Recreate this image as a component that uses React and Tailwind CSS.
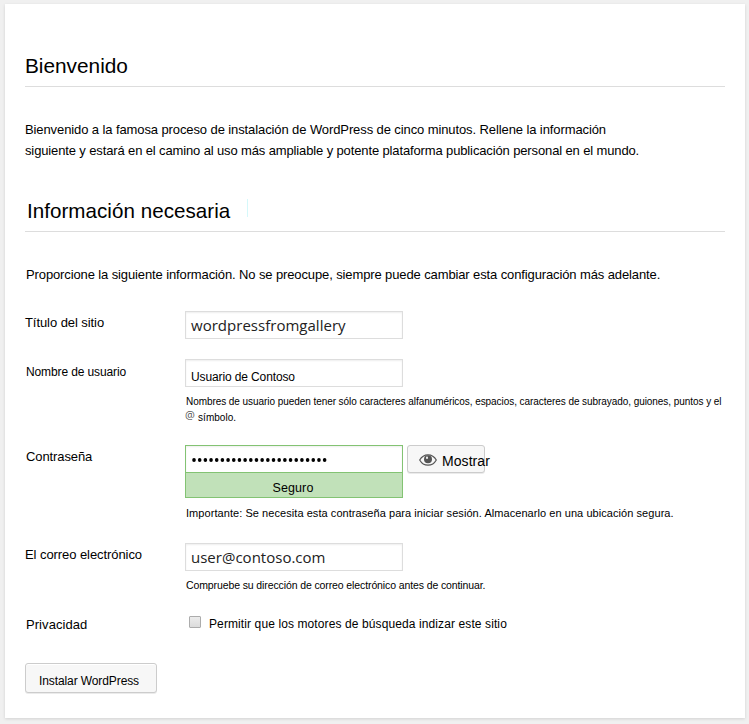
function Field({ label, labelClass, className, children }) {
  return (
    <div className={`flex ${className}`}>
      <label className={`block w-[160px] shrink-0 whitespace-nowrap leading-4 ${labelClass}`}>{label}</label>
      <div className="min-w-0 flex-1 whitespace-nowrap">{children}</div>
    </div>
  );
}

function TextBox({ className, children }) {
  return (
    <div
      className={`h-7 w-[218px] border border-[#ddd] bg-white pl-[5px] shadow-[inset_0_1px_2px_rgba(0,0,0,0.07)] ${className}`}
    >
      {children}
    </div>
  );
}

function EyeIcon() {
  return (
    <svg width="18" height="12" viewBox="0 0 18 12" className="mt-2 shrink-0" fill="none">
      <path d="M0.7 6C2.6 2.6 5.5 0.8 9 0.8S15.4 2.6 17.3 6C15.4 9.4 12.5 11.2 9 11.2S2.6 9.4 0.7 6Z" stroke="#555" strokeWidth="1.2" />
      <circle cx="9" cy="5.2" r="4" fill="#555" />
      <ellipse cx="8" cy="3.7" rx="1" ry="1.3" fill="#f7f7f7" />
    </svg>
  );
}

export default function App() {
  return (
    <div className="h-[724px] w-[749px] bg-[#f0f0f0] pt-1 pl-[5px] font-['Liberation_Sans',Arial,sans-serif] text-black">
      <main className="h-[714px] w-[740px] bg-white px-5 pt-[50px] shadow-[0_1px_3px_rgba(0,0,0,0.13)]">
        <h1 className="h-[33px] border-b border-[#ddd] text-[20.8px] leading-6">Bienvenido</h1>
        <p className="mt-8 text-[13px] leading-[21px] whitespace-nowrap">
          <span className="block tracking-[-0.1px]">
            Bienvenido a la famosa proceso de instalación de WordPress de cinco minutos. Rellene la información
          </span>
          <span className="block tracking-[-0.13px]">
            siguiente y estará en el camino al uso más ampliable y potente plataforma publicación personal en el mundo.
          </span>
        </p>
        <h2 className="mt-[38px] flex h-[33px] border-b border-[#ddd] pl-[2px] text-[20.6px] leading-6 tracking-[0.03px]">
          <span className="w-[220px]">Información necesaria</span>
          <span className="h-[18px] w-px bg-[#d5f8fa]" />
        </h2>
        <p className="mt-8 pl-px text-[13px] leading-[21px] tracking-[-0.117px] whitespace-nowrap">
          Proporcione la siguiente información. No se preocupe, siempre puede cambiar esta configuración más adelante.
        </p>

        <form className="mt-[26px]">
          <Field label="Título del sitio" labelClass="pt-1 text-[13px] tracking-[-0.07px]" className="h-12">
            <TextBox className="font-['Open_Sans',sans-serif] text-[15px] leading-[27px] tracking-[0.02px] text-[#222]">
              wordpressfromgallery
            </TextBox>
          </Field>

          <Field label="Nombre de usuario" labelClass="pl-px pt-[5px] text-[12px] tracking-[-0.12px]" className="h-[86px]">
            <TextBox className="pt-[9px] text-[12px] leading-4 tracking-[-0.12px]">Usuario de Contoso</TextBox>
            <p className="mt-[7px] pl-px text-[10px] leading-4 tracking-[-0.06px]">
              Nombres de usuario pueden tener sólo caracteres alfanuméricos, espacios, caracteres de subrayado, guiones, puntos y el
            </p>
            <p className="flex text-[10px] leading-4">
              <span className="-mt-[3px] w-[13px] font-['Open_Sans',sans-serif] text-[11px] text-[#555]">@</span>
              <span className="tracking-[0.05px]">símbolo.</span>
            </p>
          </Field>

          <Field label="Contraseña" labelClass="pl-px pt-1 text-[13px] tracking-[-0.1px]" className="h-[98px]">
            <div className="flex">
              <div className="w-[218px] border border-[#83c373] bg-white">
                <div className="flex h-[26px] items-center pt-[2px] pl-[6px] shadow-[inset_0_1px_2px_rgba(0,0,0,0.07)]">
                  <svg width="136" height="4" viewBox="0 0 136 4" aria-hidden="true">
                    {Array.from({ length: 24 }, (_, i) => (
                      <ellipse key={i} cx={2 + i * 5.68} cy="2" rx="1.8" ry="2" fill="#000" />
                    ))}
                  </svg>
                </div>
                <div className="h-[25px] border-t border-[#83c373] bg-[#c1e1b9] pt-[7px] pr-[2px] text-center text-[12.5px] leading-4 tracking-[0.1px]">
                  Seguro
                </div>
              </div>
              <div className="ml-1 flex h-7 w-[78px] rounded-[3px] border border-[#ccc] bg-[#f7f7f7] pl-[11px] shadow-[0_1px_0_rgba(0,0,0,0.08)]">
                <EyeIcon />
                <span className="mt-[7px] ml-[5px] text-[14px] leading-4 tracking-[0.06px]">Mostrar</span>
              </div>
            </div>
            <p className="mt-[7px] pl-px text-[11px] leading-4 tracking-[0.06px]">
              Importante: Se necesita esta contraseña para iniciar sesión. Almacenarlo en una ubicación segura.
            </p>
          </Field>

          <Field label="El correo electrónico" labelClass="pt-1 text-[13px] tracking-[-0.07px]" className="h-[68px]">
            <TextBox className="font-['Open_Sans',sans-serif] text-[15px] leading-[27px] tracking-[0.01px] text-[#222]">
              user@contoso.com
            </TextBox>
            <p className="mt-[6px] pl-px text-[10.5px] leading-4 tracking-[-0.11px]">
              Compruebe su dirección de correo electrónico antes de continuar.
            </p>
          </Field>

          <Field label="Privacidad" labelClass="pl-px pt-[6px] text-[13px] tracking-[0.06px]" className="h-[52px]">
            <div className="flex">
              <span className="mt-[5px] ml-1 size-3 rounded-[1px] border border-[#acacac] bg-linear-to-b from-[#ececec] to-[#dcdcdc]" />
              <span className="mt-[5px] ml-2 text-[12px] leading-4 tracking-[0.105px]">
                Permitir que los motores de búsqueda indizar este sitio
              </span>
            </div>
          </Field>

          <button
            type="button"
            className="block h-[30px] w-[132px] rounded-[3px] border border-[#ccc] bg-[#f7f7f7] pt-[5px] pl-[13px] text-left text-[12px] leading-4 tracking-[-0.1px] whitespace-nowrap shadow-[inset_0_1px_0_#fff,0_1px_0_rgba(0,0,0,0.08)]"
          >
            Instalar WordPress
          </button>
        </form>
      </main>
    </div>
  );
}
